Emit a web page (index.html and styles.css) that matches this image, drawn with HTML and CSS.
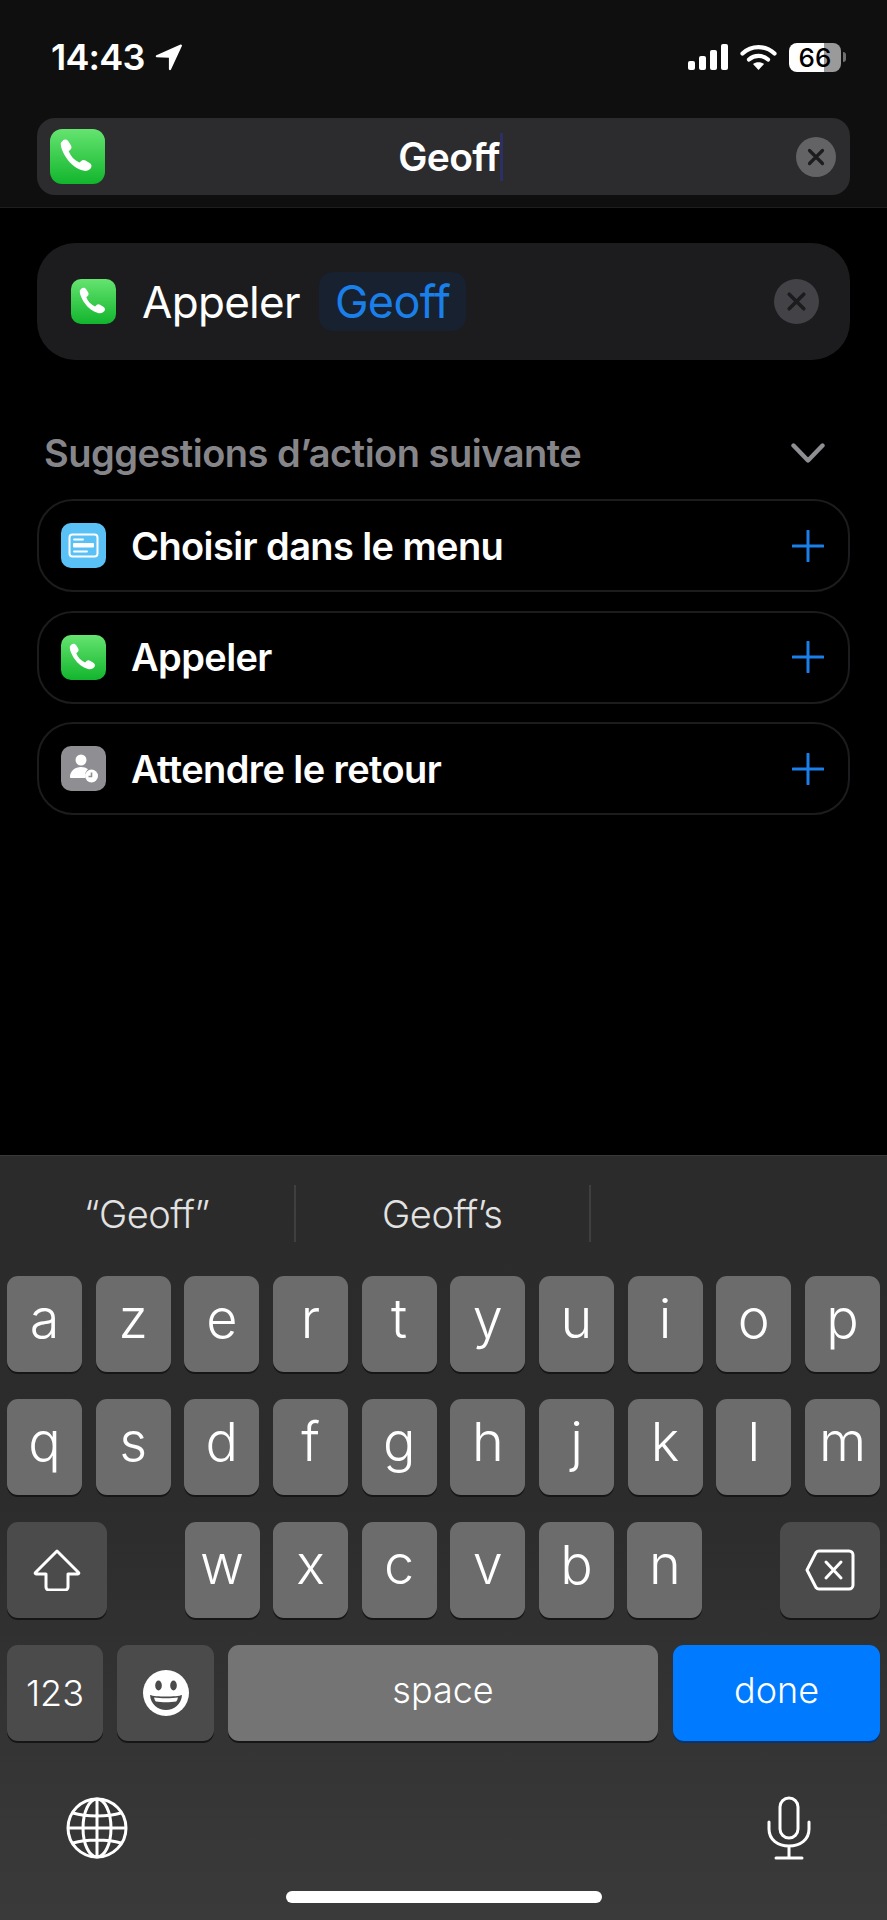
FILE: index.html
```html
<!DOCTYPE html>
<html lang="fr">
<head>
    <meta charset="UTF-8">
    <meta name="viewport" content="width=device-width, initial-scale=1.0">
    <title>Raccourcis</title>
    <link rel="stylesheet" href="styles.css">
</head>
<body>

    <!-- Shared icon definitions -->
    <svg class="defs" width="0" height="0">
        <defs>
            <linearGradient id="greenFill" x1="0" y1="0" x2="0" y2="1">
                <stop offset="0" stop-color="#65e470"/>
                <stop offset="1" stop-color="#12b52d"/>
            </linearGradient>
            <symbol id="phoneApp" viewBox="0 0 45 45">
                <rect width="45" height="45" rx="10" fill="url(#greenFill)"/>
                <path d="M10.500 9.300c1.600-1.100 3.500-.8 4.500.7l2.100 3.300c.8 1.300.6 2.700-.5 3.700l-1.300 1.200c1.600 4.200 4.600 7.300 8.800 9.200l1.400-1.300c1-1 2.400-1.100 3.600-.3l3.600 2.300c1.500 1 1.700 2.900.5 4.200-1.500 1.700-3.800 2.400-6.200 1.700-5.400-1.600-10.100-5.200-13.400-10.100-2.900-4.200-5-9.300-4.800-12 .1-1.100.7-1.400 1.700-2.100z" fill="#fff"/>
            </symbol>
            <symbol id="clearIcon" viewBox="0 0 40 40">
                <circle cx="20" cy="20" r="20" fill="currentColor"/>
                <path d="M13.500 13.500l13 13M26.500 13.500l-13 13" stroke="#1c1c1e" stroke-width="3.200" stroke-linecap="round" fill="none"/>
            </symbol>
            <symbol id="plusIcon" viewBox="0 0 32 32">
                <path d="M16 1v30M1 16h30" stroke="#1a7fe8" stroke-width="3" stroke-linecap="round" fill="none"/>
            </symbol>
        </defs>
    </svg>

    <header class="top-bar">
        <div class="status-bar">
            <div class="status-left">
                <span class="clock">14:43</span>
                <svg class="location" viewBox="0 0 28 28"><path d="M25.500 1.500c.9-.4 1.800.5 1.400 1.400L16 26.500c-.5 1.100-2.100.8-2.100-.4V14.800L1.800 14.300C.6 14.200.3 12.700 1.400 12.200z" fill="#fff"/></svg>
            </div>
            <div class="status-right">
                <svg class="signal" viewBox="0 0 40 26">
                    <rect x="0" y="17" width="7" height="9" rx="2" fill="#fff"/>
                    <rect x="11" y="12" width="7" height="14" rx="2" fill="#fff"/>
                    <rect x="22" y="6" width="7" height="20" rx="2" fill="#fff"/>
                    <rect x="33" y="0" width="7" height="26" rx="2" fill="#fff"/>
                </svg>
                <svg class="wifi" viewBox="0 0 37 26">
                    <path d="M2.500 9.500C11.500 1 25.500 1 34.500 9.500" stroke="#fff" stroke-width="4.200" stroke-linecap="round" fill="none"/>
                    <path d="M9 15.500c5.500-4.800 13.500-4.800 19 0" stroke="#fff" stroke-width="4.200" stroke-linecap="round" fill="none"/>
                    <path d="M13 20c3-2.500 8-2.500 11 0l-5.500 6z" fill="#fff"/>
                </svg>
                <div class="battery">
                    <span class="battery-body">66</span>
                    <span class="battery-nub"></span>
                </div>
            </div>
        </div>

        <div class="search-bar">
            <svg class="search-icon"><use href="#phoneApp"/></svg>
            <div class="search-text">Geoff<span class="caret"></span></div>
            <svg class="search-clear"><use href="#clearIcon"/></svg>
        </div>
    </header>

    <main class="content">
        <div class="action-card">
            <svg class="row-icon"><use href="#phoneApp"/></svg>
            <span class="action-name">Appeler</span>
            <span class="action-chip">Geoff</span>
            <svg class="action-clear"><use href="#clearIcon"/></svg>
        </div>

        <div class="section-head">
            <span>Suggestions d’action suivante</span>
            <svg class="chevron" viewBox="0 0 34 20"><path d="M2.500 2.500 17 17.500 31.500 2.500" stroke="#8e8e93" stroke-width="4.400" stroke-linecap="round" stroke-linejoin="round" fill="none"/></svg>
        </div>

        <div class="suggestion">
            <svg class="row-icon" viewBox="0 0 45 45">
                <rect width="45" height="45" rx="10" fill="#5ac1f7"/>
                <rect x="8.500" y="11.500" width="28" height="22" rx="3" fill="none" stroke="#fff" stroke-width="2"/>
                <path d="M13 16.500h9M13 28.500h13" stroke="#fff" stroke-width="1.800" stroke-linecap="round"/>
                <rect x="12" y="20" width="21" height="4.500" rx="1" fill="#fff"/>
            </svg>
            <span class="suggestion-name">Choisir dans le menu</span>
            <svg class="plus"><use href="#plusIcon"/></svg>
        </div>

        <div class="suggestion">
            <svg class="row-icon"><use href="#phoneApp"/></svg>
            <span class="suggestion-name">Appeler</span>
            <svg class="plus"><use href="#plusIcon"/></svg>
        </div>

        <div class="suggestion">
            <svg class="row-icon" viewBox="0 0 45 45">
                <rect width="45" height="45" rx="10" fill="#8e8e93"/>
                <circle cx="20" cy="14" r="5.500" fill="#fff"/>
                <path d="M9 31c0-6 5-10 11-10 3 0 5 .8 7 2.300-2.500 2-3.500 5-2.800 8.700H10c-.7 0-1-.3-1-1z" fill="#fff"/>
                <circle cx="30.500" cy="30" r="6.500" fill="#fff"/>
                <path d="M30.500 26.500V30.500h-3" stroke="#8e8e93" stroke-width="1.600" fill="none"/>
            </svg>
            <span class="suggestion-name">Attendre le retour</span>
            <svg class="plus"><use href="#plusIcon"/></svg>
        </div>
    </main>

    <section class="keyboard">
        <div class="predictions">
            <span class="prediction">“Geoff”</span>
            <span class="prediction">Geoff’s</span>
            <span class="prediction"></span>
        </div>

        <div class="key-row">
            <div class="key">a</div><div class="key">z</div><div class="key">e</div><div class="key">r</div><div class="key">t</div>
            <div class="key">y</div><div class="key">u</div><div class="key">i</div><div class="key">o</div><div class="key">p</div>
        </div>

        <div class="key-row">
            <div class="key">q</div><div class="key">s</div><div class="key">d</div><div class="key">f</div><div class="key">g</div>
            <div class="key">h</div><div class="key">j</div><div class="key">k</div><div class="key">l</div><div class="key">m</div>
        </div>

        <div class="key-row row-split">
            <div class="key key-dark key-side">
                <svg class="shift" viewBox="0 0 48 42"><path d="M24 2 2.500 23.500c-.6.600-.2 1.500.6 1.500H13v13c0 1.700 1.300 3 3 3h16c1.700 0 3-1.300 3-3V25h9.900c.8 0 1.200-.9.600-1.500z" fill="none" stroke="#fff" stroke-width="3" stroke-linejoin="round"/></svg>
            </div>
            <div class="letters">
                <div class="key">w</div><div class="key">x</div><div class="key">c</div>
                <div class="key">v</div><div class="key">b</div><div class="key">n</div>
            </div>
            <div class="key key-dark key-side">
                <svg class="backspace" viewBox="0 0 50 42"><path d="M14 2h30c2.200 0 4 1.800 4 4v30c0 2.200-1.800 4-4 4H14c-1.200 0-2.200-.5-3-1.500L2 21l9-17.500C11.800 2.500 12.800 2 14 2zM21 13l15 16M36 13 21 29" fill="none" stroke="#fff" stroke-width="3" stroke-linejoin="round" stroke-linecap="round"/></svg>
            </div>
        </div>

        <div class="key-row row-bottom">
            <div class="key key-dark key-small key-num">123</div>
            <div class="key key-dark key-emoji">
                <svg class="emoji" viewBox="0 0 46 46">
                    <circle cx="23" cy="23" r="23" fill="#fff"/>
                    <ellipse cx="15.500" cy="15.500" rx="3.300" ry="5" fill="#4a4a4a"/>
                    <ellipse cx="30.500" cy="15.500" rx="3.300" ry="5" fill="#4a4a4a"/>
                    <path d="M7 25c5 2 27 2 32 0-.5 9-8 15-16 15S7.500 34 7 25z" fill="#4a4a4a"/>
                    <path d="M11 27.500c6 1 18 1 24 0-.5 2-1 3-1.800 4-6 1-14.400 1-20.400 0-.8-1-1.300-2-1.800-4z" fill="#fff"/>
                </svg>
            </div>
            <div class="key key-small key-space">space</div>
            <div class="key key-small key-done">done</div>
        </div>

        <div class="key-extras">
            <svg class="globe" viewBox="0 0 62 62">
                <g fill="none" stroke="#fff" stroke-width="3">
                    <circle cx="31" cy="31" r="29"/>
                    <ellipse cx="31" cy="31" rx="14" ry="29"/>
                    <path d="M31 2v58M2 31h58M7 16c13 4 35 4 48 0M7 46c13-4 35-4 48 0"/>
                </g>
            </svg>
            <svg class="mic" viewBox="0 0 44 64">
                <g fill="none" stroke="#fff" stroke-width="3" stroke-linecap="round">
                    <rect x="13" y="2" width="18" height="40" rx="9"/>
                    <path d="M2 26v7c0 11 9 17 20 17s20-6 20-17v-7M22 50v11M9 62h26"/>
                </g>
            </svg>
        </div>

        <div class="home-row">
            <div class="home-bar"></div>
        </div>
    </section>

</body>
</html>
```

FILE: styles.css
```css
/* General Page Styling */
* {
    box-sizing: border-box;
}

body {
    font-family: Inter, 'Liberation Sans', sans-serif;
    margin: 0;
    width: 887px;
    height: 1920px;
    display: flex;
    flex-direction: column;
    background-color: #000000;
    color: #FFFFFF;
    overflow: hidden;
}

.defs {
    position: absolute;
}

/* Header with status bar and search */
.top-bar {
    height: 208px;
    padding: 42px 37px 0;
    background-color: #0f0f0f;
    border-bottom: 1px solid #1e1e1e;
}

.status-bar {
    display: flex;
    justify-content: space-between;
    align-items: center;
    height: 30px;
    margin-bottom: 46px;
}

.status-left {
    display: flex;
    align-items: center;
    padding-left: 14px;
}

.clock {
    font-size: 36px;
    font-weight: 600;
    letter-spacing: -0.8px;
}

.location {
    width: 28px;
    height: 28px;
    margin-left: 10px;
}

.status-right {
    display: flex;
    align-items: center;
    margin-right: 4px;
}

.signal {
    width: 40px;
    height: 26px;
}

.wifi {
    width: 37px;
    height: 26px;
    margin-left: 12px;
}

.battery {
    display: flex;
    align-items: center;
    margin-left: 12px;
}

.battery-body {
    width: 52px;
    height: 29px;
    border-radius: 8px;
    background: linear-gradient(90deg, #FFFFFF 35px, #9a9a9a 35px);
    color: #000000;
    font-size: 26px;
    font-weight: 500;
    line-height: 29px;
    text-align: center;
}

.battery-nub {
    width: 3px;
    height: 10px;
    margin-left: 2px;
    border-radius: 0 3px 3px 0;
    background-color: #6f6f6f;
}

/* Search Bar */
.search-bar {
    display: flex;
    align-items: center;
    justify-content: space-between;
    height: 77px;
    padding: 0 14px 0 13px;
    border-radius: 18px;
    background-color: #2c2c2e;
}

.search-icon {
    width: 55px;
    height: 55px;
}

.search-text {
    display: flex;
    align-items: center;
    font-size: 39px;
    font-weight: 600;
    letter-spacing: -0.6px;
}

.caret {
    width: 3px;
    height: 48px;
    margin-left: 0;
    background-color: #2b2f63;
}

.search-clear {
    width: 40px;
    height: 40px;
    color: #636366;
}

/* Main Content */
.content {
    flex: 1;
    padding: 35px 37px 0;
}

.action-card {
    display: flex;
    align-items: center;
    height: 117px;
    padding: 0 31px 0 34px;
    border-radius: 38px;
    background-color: #1c1c1e;
}

.row-icon {
    width: 45px;
    height: 45px;
    flex-shrink: 0;
}

.action-name {
    margin-left: 26px;
    font-size: 44px;
    font-weight: 400;
    letter-spacing: -0.7px;
}

.action-chip {
    margin-left: 19px;
    padding: 0 16px;
    height: 59px;
    line-height: 59px;
    border-radius: 14px;
    background-color: #17212f;
    color: #1a7fe8;
    font-size: 45px;
    font-weight: 400;
    letter-spacing: -0.6px;
}

.action-clear {
    width: 45px;
    height: 45px;
    margin-left: auto;
    color: #434347;
}

.section-head {
    display: flex;
    align-items: center;
    justify-content: space-between;
    height: 44px;
    margin: 71px 0 24px;
    padding: 0 25px 0 7px;
    color: #86868a;
    font-size: 38px;
    font-weight: 600;
    letter-spacing: -0.5px;
}

.chevron {
    width: 34px;
    height: 20px;
}

/* Suggestion Rows */
.suggestion {
    display: flex;
    align-items: center;
    height: 93px;
    margin-bottom: 18.700px;
    padding: 0 24px 0 22px;
    border: 2px solid #1c1c1e;
    border-radius: 36px;
}

.suggestion-name {
    margin-left: 25px;
    font-size: 38px;
    font-weight: 600;
    letter-spacing: -0.6px;
}

.plus {
    width: 32px;
    height: 32px;
    margin-left: auto;
}

/* Keyboard */
.keyboard {
    height: 765px;
    padding: 0 7px;
    background: linear-gradient(180deg, #2b2b2b 0%, #2c2c2c 45%, #3a3a3a 100%);
    border-top: 1px solid #383838;
}

.predictions {
    display: flex;
    height: 120px;
    padding-top: 29px;
    margin: 0 -7px;
}

.prediction {
    width: 295.500px;
    height: 57px;
    line-height: 58px;
    text-align: center;
    font-size: 38px;
    font-weight: 300;
    color: #e2e2e2;
    letter-spacing: -0.5px;
    border-right: 2px solid #3f3f3f;
}

.prediction:last-child {
    border-right: none;
}

.key-row {
    display: flex;
    gap: 13.600px;
    height: 96px;
    margin-bottom: 27px;
}

.row-split {
    justify-content: space-between;
}

.letters {
    display: flex;
    gap: 13.600px;
}

.letters .key {
    width: 75px;
    flex: none;
}

.key {
    flex: 1;
    display: flex;
    align-items: center;
    justify-content: center;
    border-radius: 11px;
    background-color: #6c6c6c;
    box-shadow: 0 2px 0 #161616;
    font-size: 54px;
    font-weight: 300;
    padding-bottom: 11px;
}

.key-dark {
    background-color: #4b4b4b;
}

.key-side {
    flex: none;
    width: 100px;
    padding-bottom: 0;
}

.key-small {
    font-size: 36px;
    font-weight: 300;
    padding-bottom: 7px;
}

.row-bottom {
    gap: 14px;
}

.key-num {
    flex: none;
    width: 96px;
    padding-bottom: 0;
}

.key-emoji {
    flex: none;
    width: 97px;
    padding-bottom: 0;
}

.key-space {
    flex: none;
    width: 430px;
    margin-right: 1px;
    background-color: #747474;
}

.key-done {
    flex: none;
    width: 207px;
    background-color: #007AFF;
    box-shadow: 0 2px 0 #04356e;
}

.shift {
    width: 48px;
    height: 42px;
}

.backspace {
    width: 50px;
    height: 42px;
}

.emoji {
    width: 46px;
    height: 46px;
}

.key-extras {
    display: flex;
    align-items: center;
    justify-content: space-between;
    height: 64px;
    margin-top: 55px;
    padding: 0 69px 0 59px;
}

.globe {
    width: 62px;
    height: 62px;
}

.mic {
    width: 44px;
    height: 64px;
}

.home-row {
    display: flex;
    justify-content: center;
    margin-top: 31px;
}

.home-bar {
    width: 316px;
    height: 12px;
    border-radius: 6px;
    background-color: #FFFFFF;
}
```
